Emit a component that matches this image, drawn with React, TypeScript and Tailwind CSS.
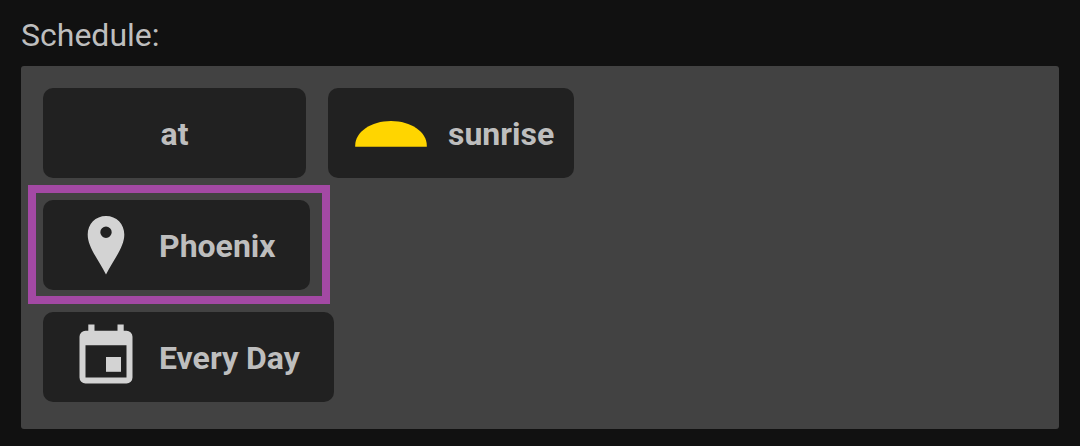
import type { ReactNode } from "react";

function SunriseIcon() {
  return (
    <svg aria-hidden="true" viewBox="0 0 72 72" className="size-[72px] shrink-0">
      <path d="M0.2 49.8 V48.5 C0.2 35 16 24 36 24 S71.8 35 71.8 48.5 V49.8 Z" fill="#ffd500" />
    </svg>
  );
}

function PinIcon() {
  return (
    <svg aria-hidden="true" viewBox="0 0 72 72" className="size-[72px] shrink-0">
      <path
        fillRule="evenodd"
        fill="#d3d3d3"
        d="M36 7 C25.5 7 17.7 15 17.7 25.5 C17.7 38 28 50 36 65.5 C44 50 54.3 38 54.3 25.5 C54.3 15 46.5 7 36 7 Z M36 17.5 a5.7 5.7 0 1 1 0 11.4 a5.7 5.7 0 1 1 0 -11.4 Z"
      />
    </svg>
  );
}

function CalendarIcon() {
  return (
    <svg aria-hidden="true" viewBox="0 0 72 72" className="size-[72px] shrink-0">
      <path
        fillRule="evenodd"
        fill="#d3d3d3"
        d="M18.3 3.5 H24.5 V9.7 H47.5 V3.5 H53.7 V9.7 H56.5 A6 6 0 0 1 62.5 15.7 V56.5 A6 6 0 0 1 56.5 62.5 H15.5 A6 6 0 0 1 9.5 56.5 V15.7 A6 6 0 0 1 15.5 9.7 H18.3 Z M15.5 24.3 V56.5 H56.5 V24.3 Z"
      />
      <path fill="#d3d3d3" d="M36 36 H51 V50.8 H36 Z" />
    </svg>
  );
}

interface ChipProps {
  icon?: ReactNode;
  label: string;
  className: string;
}

function Chip({ icon, label, className }: ChipProps) {
  return (
    <button
      type="button"
      className={`flex h-[90px] items-center rounded-[10px] bg-[#212121] text-[32px] leading-10 font-bold whitespace-nowrap text-[#bebebe] ${className}`}
    >
      {icon}
      <span className="pt-0.5">{label}</span>
    </button>
  );
}

export default function App() {
  return (
    <main className="min-h-screen bg-[#111111] px-[21px] pt-[15px] pb-4 font-['Roboto',sans-serif]">
      <h1 className="text-[32px] leading-10 font-normal text-[#bebebe]">Schedule:</h1>
      <section
        aria-label="Schedule"
        className="mt-[11px] flex flex-col items-start gap-[22px] rounded-[3px] bg-[#424242] px-[22px] pt-[22px] pb-[27px]"
      >
        <div className="flex flex-wrap gap-[22px]">
          <Chip label="at" className="min-w-[263px] justify-center" />
          <Chip icon={<SunriseIcon />} label="sunrise" className="gap-[21px] pr-5 pl-[27px]" />
        </div>
        <div className="relative">
          <Chip icon={<PinIcon />} label="Phoenix" className="gap-[17px] pr-[34px] pl-[27px]" />
          <div className="pointer-events-none absolute -top-[15px] -right-5 -bottom-[14px] -left-[15px] border-8 border-[#a349a4]" />
        </div>
        <Chip icon={<CalendarIcon />} label="Every Day" className="gap-[17px] pr-[34px] pl-[27px]" />
      </section>
    </main>
  );
}
